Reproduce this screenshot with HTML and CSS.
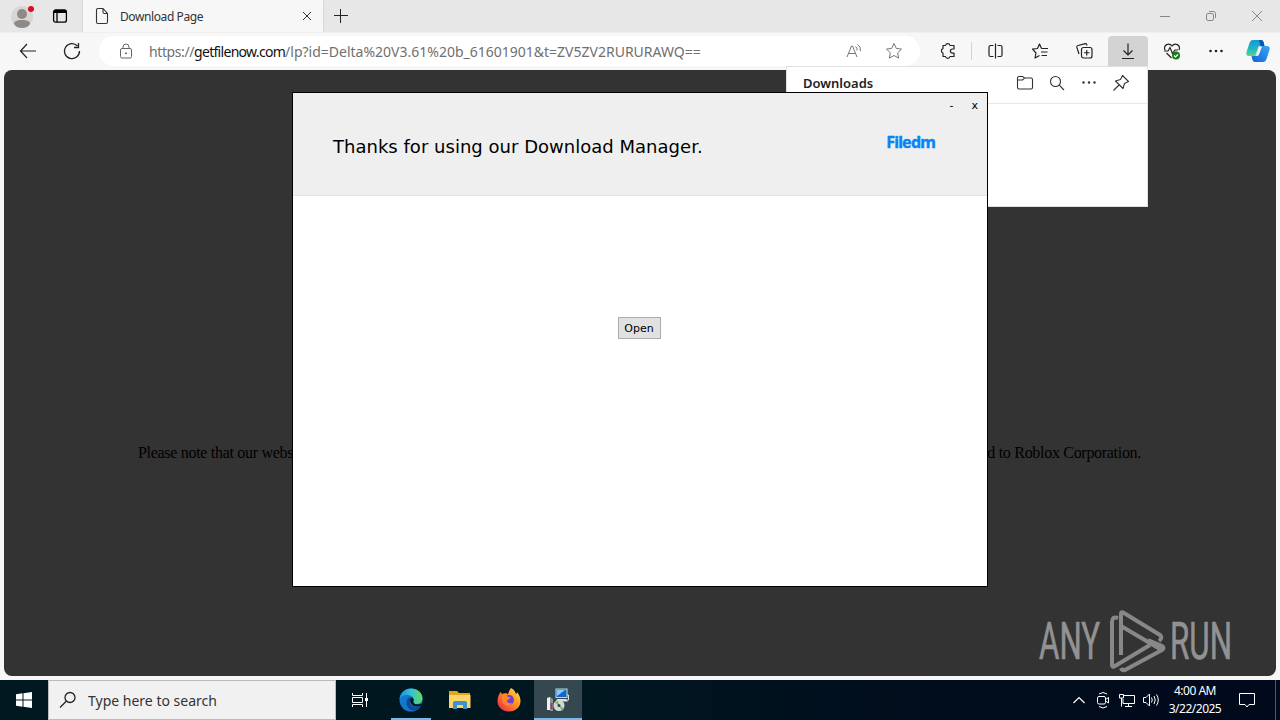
FILE: index.html
```html
<!DOCTYPE html>
<html lang="en">

<head>
  <meta charset="UTF-8">
  <title>Download Page</title>
  <link rel="stylesheet" href="styles.css">
</head>

<body>
  <!-- tabs -->
  <div class="tabs">
    <svg class="avatar" width="26" height="26" viewBox="0 0 26 26">
      <circle cx="13" cy="13" r="11" fill="#d8d5d3"/>
      <circle cx="13" cy="10" r="5" fill="#8d8a88"/>
      <path d="M5 20c0-3 3-4 8-4s8 1 8 4c-2 3-5 4-8 4s-6-1-8-4z" fill="#8d8a88"/>
      <circle cx="22" cy="5" r="3" fill="#e00b1c"/>
    </svg>
    <svg class="workspace" width="16" height="16" viewBox="0 0 16 16" fill="none" stroke="#000" stroke-width="1.3">
      <rect x="1.6" y="2" width="12.8" height="12.2" rx="2"/>
      <path d="M2 3.500h12" stroke-width="3"/>
      <path d="M5 4v10"/>
    </svg>
    <div class="tab">
      <svg width="14" height="18" viewBox="0 0 14 18" fill="none" stroke="#333" stroke-width="1.1">
        <path d="M3 1.5h5l4.500 5V15q0 1.500-1.500 1.500H3q-1.500 0-1.500-1.500V3Q1.500 1.500 3 1.500zM8 1.500V5q0 1.500 1.500 1.500h3"/>
      </svg>
      <span class="tab-title">Download Page</span>
      <svg width="10" height="10" viewBox="0 0 10 10" stroke="#333"><path d="M1 1l8 8M9 1l-8 8"/></svg>
    </div>
    <svg class="new-tab" width="16" height="16" viewBox="0 0 16 16" stroke="#222"><path d="M7.500 1v14M1 7.500h14"/></svg>
    <div class="win-buttons">
      <svg width="12" height="12" viewBox="0 0 12 12" stroke="#888"><path d="M1 6.500h10"/></svg>
      <svg width="12" height="12" viewBox="0 0 12 12" fill="none" stroke="#888">
        <rect x="1.500" y="3.500" width="7" height="7" rx="1.500"/>
        <path d="M4 1.500h4.500q2 0 2 2V8"/>
      </svg>
      <svg width="12" height="12" viewBox="0 0 12 12" stroke="#888"><path d="M1 1l10 10M11 1L1 11"/></svg>
    </div>
  </div>

  <!-- toolbar -->
  <div class="toolbar">
    <div class="nav">
      <svg width="18" height="18" viewBox="0 0 18 18" fill="none" stroke="#222" stroke-width="1.200"><path d="M17 9H1.500M8 2L1.500 9L8 16"/></svg>
      <svg width="18" height="18" viewBox="0 0 18 18" fill="none" stroke="#222" stroke-width="1.300"><path d="M16.500 9A7.500 7.500 0 1 1 14.500 4M15.500 1v4.500H11"/></svg>
    </div>
    <div class="address">
      <svg class="lock" width="14" height="16" viewBox="0 0 14 16" fill="none" stroke="#666">
        <rect x="1.500" y="5.500" width="11" height="9.500" rx="1.500"/>
        <path d="M4 5.500V4a3 3 0 0 1 6 0v1.500"/>
        <circle cx="7" cy="10.300" r=".6" fill="#666"/>
      </svg>
      <span class="url"><span class="scheme">https://</span><b>getfilenow.com</b>/lp?id=Delta%20V3.61%20b_61601901&amp;t=ZV5ZV2RURURAWQ==</span>
      <svg class="read" width="18" height="16" viewBox="0 0 18 16" fill="none" stroke="#777">
        <path d="M2 14L6.500 3h1L12 14M3.500 10.500h7M10.500 3.500q2 1.500 1.500 4M12.500 1.500q3.500 2 3 6.500"/>
      </svg>
      <svg class="star" width="18" height="18" viewBox="0 0 18 18" fill="none" stroke="#777" stroke-linejoin="round">
        <path d="M9 1.500l2.300 4.900 5.200.7-3.800 3.700.9 5.300L9 13.500l-4.600 2.600.9-5.300L1.500 7.100l5.200-.7z"/>
      </svg>
    </div>
    <div class="tools">
      <svg class="puzzle" width="18" height="18" viewBox="0 0 18 18" fill="none" stroke="#222" stroke-width="1.200" stroke-linejoin="round">
        <path d="M4 3.500h2.500a2.300 2.300 0 0 1 4.500 0h4V7h-1.500a2 2 0 0 0 0 4.200H15v3.300h-4a2.300 2.300 0 0 1-4.500 0H4V11a2.300 2.300 0 0 1 0-4.400z"/>
      </svg>
      <i class="divider"></i>
      <svg width="18" height="18" viewBox="0 0 18 18" fill="none" stroke="#222" stroke-width="1.200">
        <path d="M6.500 3.500h-3q-1.500 0-1.500 1.500v8q0 1.500 1.500 1.500h3M10.500 3.500h3q1.500 0 1.500 1.500v8q0 1.500-1.500 1.500h-3M8.500 1.500v15"/>
      </svg>
      <svg width="18" height="18" viewBox="0 0 18 18" fill="none" stroke="#222" stroke-width="1.200" stroke-linejoin="round">
        <path d="M10.500 6.500L8.500 2 6.500 6.500l-5 .7L5 11l-1 5 4.500-2.500M10.500 6.500H17M10 10h6.500M10.500 13.500H16"/>
      </svg>
      <svg width="18" height="18" viewBox="0 0 18 18" fill="none" stroke="#222" stroke-width="1.200">
        <path d="M12 3.500l-.3-1q-.4-1-1.500-.8L3 3.500q-1.500.4-1.200 1.700L4 12"/>
        <rect x="6.500" y="5.500" width="10.500" height="10.500" rx="2"/>
        <path d="M11.750 8v5.500M9 10.750h5.500"/>
      </svg>
      <div class="download">
        <svg width="16" height="18" viewBox="0 0 16 18" fill="none" stroke="#222" stroke-width="1.200"><path d="M8 1.500v11.500M3.500 8.500L8 13l4.500-4.500M2 16.500h12"/></svg>
      </div>
      <svg width="18" height="18" viewBox="0 0 18 18" fill="none" stroke="#222" stroke-width="1.200">
        <path d="M2 8C0 3 6 0 9 4c3-4 9-1 7 4M1 9h4l2-3.500 2.500 6L12 8h3M3.500 11l5 5"/>
        <circle cx="13" cy="13.500" r="4" fill="#187d18" stroke="none"/>
        <path d="M11 13.500l1.500 1.500 2.500-2.500" stroke="#fff"/>
      </svg>
      <svg width="18" height="18" viewBox="0 0 18 18" fill="#222"><circle cx="3.500" cy="9" r="1.300"/><circle cx="9" cy="9" r="1.300"/><circle cx="14.500" cy="9" r="1.300"/></svg>
      <svg class="copilot" width="26" height="24" viewBox="0 0 26 24">
        <defs>
          <linearGradient id="cp1" x1="0" y1="0" x2="0" y2="1"><stop offset="0" stop-color="#1597d8"/><stop offset=".55" stop-color="#22b7c0"/><stop offset="1" stop-color="#5ed58b"/></linearGradient>
          <linearGradient id="cp2" x1="1" y1="0" x2="0" y2="1"><stop offset="0" stop-color="#38a6f5"/><stop offset="1" stop-color="#1664d8"/></linearGradient>
        </defs>
        <path d="M8 1h8q2 0 2.500 2l1 4h-4q-2 0-2.600 2l-1.900 6q-.6 2-2.500 2H4q-3.500 0-2.500-4L4.500 4Q5.500 1 8 1z" fill="url(#cp1)"/>
        <path d="M14 1h2q2 0 2.500 2l1 4h-4z" fill="#0b55ad"/>
        <path d="M18 23h-8q-2 0-2.500-2l-1-4h2.500q2 0 2.600-2l2-6q.6-2 2.500-2H22q3.500 0 2.500 4l-3 9q-1 3-3.500 3z" fill="url(#cp2)"/>
        <path d="M14.500 7.500h2.500l-3 8q-.7 1.500-2.500 1.500H9.500q1.500 0 2-1.500l2-6.500q.3-1.200 1-1.500z" fill="#f7f7f7"/>
      </svg>
    </div>
  </div>

  <!-- page content -->
  <div class="page">
    <p class="note"><span>Please note that our webs</span><span>d to Roblox Corporation.</span></p>
    <svg class="watermark" width="236" height="70" viewBox="0 0 236 70">
      <g fill="#929292" stroke="#929292" stroke-width=".7">
        <text x="2" y="50" textLength="61" lengthAdjust="spacingAndGlyphs">ANY</text>
        <text x="133" y="50" textLength="62" lengthAdjust="spacingAndGlyphs">RUN</text>
      </g>
      <g fill="none" stroke="#888" stroke-width="4" stroke-linejoin="round">
        <path d="M81 9q-6-2-6 4v43q0 3 3 1l35-21"/>
        <path d="M84 46V5q0-3 3-1l36 22q3 3-1 6M84 17l39 23q3-3-1-4"/>
        <path d="M111 31l14 6q3 2 0 4L88 61q-3 1-4-2"/>
      </g>
    </svg>
  </div>

  <!-- taskbar -->
  <div class="taskbar">
    <div class="start">
      <svg width="16" height="16" viewBox="0 0 16 16" fill="#fff"><path d="M0 2.300L6.500 1.300v6.200H0zM7.500 1.200L16 0v7.500H7.500zM0 8.500h6.500v6.200L0 13.700zM7.500 8.500H16V16l-8.500-1.200z"/></svg>
    </div>
    <div class="search">
      <svg width="18" height="18" viewBox="0 0 18 18" fill="none" stroke="#222" stroke-width="1.300"><circle cx="11" cy="6.500" r="5"/><path d="M7.500 10L1 16.500"/></svg>
      <span>Type here to search</span>
    </div>
    <div class="apps">
      <div class="app view">
        <svg width="18" height="18" viewBox="0 0 18 18" fill="none" stroke="#fff">
          <path d="M1.500 2v2.500h10V2M1.500 16v-2.500h10V16M1.500 6.500h10v5h-10zM15.500 2v14"/>
          <path d="M14 7h3v3h-3z" fill="#fff" stroke="none"/>
        </svg>
      </div>
      <div class="app open">
        <svg width="24" height="24" viewBox="0 0 24 24">
          <defs>
            <linearGradient id="e1" x1="0" y1="0" x2="1" y2="0"><stop offset="0" stop-color="#1b8fdc"/><stop offset=".5" stop-color="#35c1d8"/><stop offset="1" stop-color="#66d957"/></linearGradient>
          </defs>
          <circle cx="12" cy="12" r="11.500" fill="#1377ce"/>
          <path d="M.5 11C1.500 4 6.500.5 12 .5c7 0 11.500 5 11.500 9.500 0 4-3 6-6 6-4 0-3.500-2-3-3 1.500-4-3-6-6.500-6-3 0-6 1.500-7.500 4z" fill="url(#e1)"/>
          <path d="M9 10c-4 6 0 13 7 12.500 3-.8 5-3 6-5-5 2.500-12 1-11-5 0-1 .5-2 1.500-2.500-1-.8-2.500-.8-3.500 0z" fill="#0d4b96"/>
          <path d="M14.500 13c.6-2-.5-3-2-3.500-2 1.500-2 5 1 7.500 3 2 6 1.500 9 .5l.5-2c-2 1-9 2-8.500-2.500z" fill="#001820"/>
        </svg>
      </div>
      <div class="app">
        <svg width="22" height="20" viewBox="0 0 22 20">
          <path d="M0 1h8l2 2h11v5H0z" fill="#e8a317"/>
          <path d="M0 5h21.500v13H0z" fill="#fbd667"/>
          <path d="M4 19v-6q0-2 2-2h10q2 0 2 2v6h-4v-4H8v4z" fill="#3e93cd"/>
        </svg>
      </div>
      <div class="app">
        <svg width="24" height="24" viewBox="0 0 24 24">
          <defs>
            <linearGradient id="f1" x1="1" y1="0" x2="0" y2="1"><stop offset="0" stop-color="#ffe94a"/><stop offset=".45" stop-color="#ff9123"/><stop offset="1" stop-color="#ed194f"/></linearGradient>
          </defs>
          <path d="M14 0c3 1.500 4.500 4 5 6 1-.4 1-1.500 1-2 2.500 3 3.500 6 3.500 9 0 6-5 10.500-11.500 10.500S.5 19 .5 13C.5 9 2 6 4 3.500c0 1 .3 2 1 2.500 1-.5 2-1 3.500-.8 1 0 2 .6 2.500 1C11.500 4 12.500 2 14 0z" fill="url(#f1)"/>
          <circle cx="12" cy="12" r="5" fill="#7441c9"/>
          <path d="M5 8c3-2 5-1 6 1 2 0 2.500.5 2 1.500-1 1-2.500 1-3 2-.5 2 2 3.500 5 2.500-2 4-9 3.500-10-3z" fill="#ff842b"/>
        </svg>
      </div>
      <div class="app open active">
        <svg width="24" height="24" viewBox="0 0 24 24">
          <path d="M20 7h2.500v5H17" fill="none" stroke="#ddd"/>
          <rect x="9.500" y=".5" width="12" height="9.500" fill="#c9d3dc"/>
          <rect x="10.500" y="1.500" width="10" height="7.500" fill="#1465c8"/>
          <path d="M11 2h8l-8 6z" fill="#7cd0fa"/>
          <path d="M11 11h9l2 2.500H10z" fill="#e0e0e0"/>
          <path d="M1 10l3-1v13H1z" fill="#f0f0f0"/>
          <path d="M4 9l3 2v12H4z" fill="#8b9493"/>
          <path d="M4.500 15h2v6h-2z" fill="#8a3e6b"/>
          <circle cx="13" cy="17.500" r="5.500" fill="#cfdccf"/>
          <path d="M13 18L9 14.500l3-1.800zM13 18l5 2-2 3z" fill="#7fae83"/>
          <circle cx="13" cy="17.500" r="1.500" fill="#37474c"/>
        </svg>
      </div>
    </div>
    <div class="tray">
      <svg width="14" height="18" viewBox="0 0 14 18" fill="none" stroke="#fff" stroke-width="1.200"><path d="M1.500 12L7 6.500 12.500 12"/></svg>
      <svg class="meet" width="14" height="18" viewBox="0 0 14 18" fill="none" stroke="#fff"><rect x="1.500" y="5.500" width="8" height="7.500" rx="1.500"/><path d="M9.500 8.500l3-2v5.500l-3-2M3 3q4-3 8 0M3 15.500q4 3 8 0"/></svg>
      <svg width="18" height="18" viewBox="0 0 18 18" fill="none" stroke="#fff"><path d="M6 4.500h10.500v8H5V8M10.500 12.500V15.500M7 15.500h7M1.500 3.500h4v3.500h-4zM3.500 7v8.500"/></svg>
      <svg class="sound" width="18" height="18" viewBox="0 0 18 18" fill="none" stroke="#fff"><path d="M1.500 6.500h2.500L7.500 3v12L4 11.500H1.500zM9.500 6.500q1.500 2.500 0 5M12 5q2.500 4 0 8M14.500 3.500q3.500 5.500 0 11"/></svg>
      <div class="clock"><span>4:00 AM</span><span>3/22/2025</span></div>
      <svg class="notify" width="18" height="18" viewBox="0 0 18 18" fill="none" stroke="#fff"><path d="M1.500 2.500h15v11H11l-2 2.500-2-2.500H1.500z"/></svg>
      <i class="desktop"></i>
    </div>
  </div>

  <!-- downloads flyout -->
  <div class="flyout">
    <div class="flyout-head">
      <span class="flyout-title">Downloads</span>
      <svg width="18" height="18" viewBox="0 0 18 18" fill="none" stroke="#333" stroke-width="1.100"><path d="M1.500 4q0-1.500 1.500-1.500h3.500L8.500 4H15q1.500 0 1.500 1.500v8q0 1.500-1.500 1.500H3q-1.500 0-1.500-1.500zM1.500 6h5L8.500 4"/></svg>
      <svg width="18" height="18" viewBox="0 0 18 18" fill="none" stroke="#333" stroke-width="1.100"><circle cx="7.500" cy="7.500" r="5"/><path d="M11.200 11.200L16 16"/></svg>
      <svg width="18" height="18" viewBox="0 0 18 18" fill="#333"><circle cx="3.500" cy="8.500" r="1.200"/><circle cx="9" cy="8.500" r="1.200"/><circle cx="14.500" cy="8.500" r="1.200"/></svg>
      <svg width="18" height="18" viewBox="0 0 18 18" fill="none" stroke="#333" stroke-width="1.100" stroke-linejoin="round"><path d="M10.500 1.500L16.500 7.500 12.500 9.500l-1.500 5L3.500 7l5-1.500zM7 11L1.500 16.500"/></svg>
    </div>
  </div>

  <!-- download manager window -->
  <div class="dialog">
    <div class="dialog-head">
      <div class="dialog-buttons"><span>-</span><span>x</span></div>
      <div class="dialog-title">
        <h1>Thanks for using our Download Manager.</h1>
        <span class="brand">Filedm</span>
      </div>
    </div>
    <div class="dialog-body">
      <button class="open-btn">Open</button>
    </div>
  </div>
</body>

</html>
```
FILE: styles.css
```css
* {
  box-sizing: border-box;
}

body {
  margin: 0;
  width: 1280px;
  height: 720px;
  overflow: hidden;
  display: flex;
  flex-direction: column;
  background: #f7f7f7;
  font-family: "Noto Sans", "Open Sans", sans-serif;
}

svg {
  display: block;
  flex: none;
}

/* tabs */
.tabs {
  display: flex;
  align-items: center;
  height: 32px;
  padding-left: 9px;
  background: #e7e7e7;
}

.avatar {
  margin-top: 1px;
}

.workspace {
  margin-left: 17px;
}

.tab {
  display: flex;
  align-items: center;
  width: 240px;
  height: 32px;
  margin-left: 15px;
  padding: 0 11px 0 12px;
  background: #f7f7f7;
  box-shadow: 0 0 2px #bbb;
  clip-path: inset(0 -3px);
}

.tab-title {
  margin-left: 11px;
  margin-right: auto;
  color: #333;
  font-size: 12px;
  letter-spacing: -0.4px;
}

.new-tab {
  margin-left: 10px;
}

.win-buttons {
  display: flex;
  gap: 34px;
  margin-left: auto;
  margin-right: 17px;
}

/* toolbar */
.toolbar {
  display: flex;
  align-items: center;
  height: 38px;
  padding-bottom: 1px;
  border-top: 1px solid #efefef;
}

.nav {
  display: flex;
  gap: 26px;
  width: 99px;
  padding-left: 19px;
}

.address {
  display: flex;
  align-items: center;
  width: 821px;
  height: 30px;
  padding-left: 20px;
  padding-right: 17px;
  border-radius: 15px;
  background: #fff;
}

.url {
  margin-left: 16px;
  margin-right: auto;
  color: #707070;
  font-size: 14px;
  white-space: nowrap;
}

.scheme {
  letter-spacing: -0.4px;
}

.url b {
  color: #111;
  font-weight: 400;
  letter-spacing: -0.7px;
}

.star {
  margin-left: 22px;
}

.tools {
  display: flex;
  align-items: center;
  gap: 26px;
  padding-left: 19px;
}

.puzzle {
  margin-right: -12px;
}

.divider {
  width: 1px;
  height: 18px;
  margin: 0 -11px 0 0;
  background: #d4d4d4;
}

.download {
  display: flex;
  align-items: center;
  justify-content: center;
  width: 40px;
  height: 30px;
  margin: 0 -11px;
  border-radius: 4px 4px 0 0;
  background: #d3d3d3;
}

.copilot {
  margin-left: -6px;
}

/* page content */
.page {
  display: flex;
  flex-direction: column;
  height: 606px;
  margin: 0 4px;
  border-radius: 8px;
  background: #333;
}

.note {
  display: flex;
  justify-content: space-between;
  margin: 374px 135px 0 134px;
  color: #000;
  font: 16px/18px "Liberation Serif", serif;
  letter-spacing: -0.3px;
}

.watermark {
  margin: 147px 0 0 1033px;
  font: 52px "Roboto", sans-serif;
}

/* taskbar */
.taskbar {
  display: flex;
  height: 40px;
  margin-top: 4px;
  background: linear-gradient(90deg, #001820, #001720 45%, #000c1c 75%, #000a1c);
}

.start {
  display: flex;
  align-items: center;
  justify-content: center;
  width: 48px;
}

.search {
  display: flex;
  align-items: center;
  width: 288px;
  padding-left: 10px;
  border: 1px solid #bcbcbc;
  background: #f1f1f1;
  color: #333;
  font-size: 14px;
}

.search span {
  margin-left: 11px;
}

.apps {
  display: flex;
  gap: 1px;
}

.app {
  display: flex;
  align-items: center;
  justify-content: center;
  width: 48px;
}

.view {
  margin-right: 2px;
}

.open {
  background: linear-gradient(#76b9ed, #76b9ed) center bottom / 40px 2px no-repeat;
}

.active {
  background-color: #36484f;
  background-size: 48px 2px;
}

.tray {
  display: flex;
  align-items: center;
  margin-left: auto;
  gap: 8px;
  color: #fff;
}

.meet {
  margin-left: 2px;
}

.sound {
  margin-left: -2px;
}

.clock {
  display: flex;
  flex-direction: column;
  align-items: center;
  width: 54px;
  font-size: 12px;
  line-height: 18px;
  letter-spacing: -0.5px;
}

.notify {
  margin-left: 8px;
}

.desktop {
  width: 1px;
  height: 40px;
  margin: 0 4px 0 11px;
  background: #50596a;
}

/* downloads flyout */
.flyout {
  position: absolute;
  left: 786px;
  top: 66px;
  width: 362px;
  height: 141px;
  border: 1px solid #e0e0e0;
  background: #fff;
}

.flyout-head {
  display: flex;
  align-items: center;
  gap: 14px;
  height: 37px;
  padding: 0 17px 4px 16px;
  border-bottom: 1px solid #e8e8e8;
}

.flyout-title {
  margin-right: auto;
  color: #222;
  font-size: 13px;
  font-weight: 600;
}

/* download manager window */
.dialog {
  position: absolute;
  left: 292px;
  top: 92px;
  width: 696px;
  height: 495px;
  border: 1px solid #000;
  background: #fff;
}

.dialog-head {
  height: 103px;
  border-bottom: 1px solid #e2e2e2;
  background: #efefef;
}

.dialog-buttons {
  display: flex;
  justify-content: flex-end;
  gap: 18px;
  height: 24px;
  padding-right: 9px;
  font: 11px/26px "DejaVu Sans", sans-serif;
}

.dialog-title {
  display: flex;
  justify-content: space-between;
  padding: 17px 52px 0 40px;
}

.dialog-title h1 {
  margin: 0;
  font: 18px/26px "DejaVu Sans", sans-serif;
  letter-spacing: 0.02px;
}

.brand {
  color: #0a84f5;
  font: bold 16px/16px "Noto Sans", sans-serif;
  letter-spacing: -0.8px;
  -webkit-text-stroke: 0.4px #0a84f5;
}

.dialog-body {
  display: flex;
  justify-content: center;
  padding-top: 121px;
}

.open-btn {
  width: 43px;
  height: 22px;
  margin-right: 2px;
  padding: 0;
  border: 1px solid #adadad;
  background: #e1e1e1;
  color: #000;
  font: 11px "DejaVu Sans", sans-serif;
}
```
